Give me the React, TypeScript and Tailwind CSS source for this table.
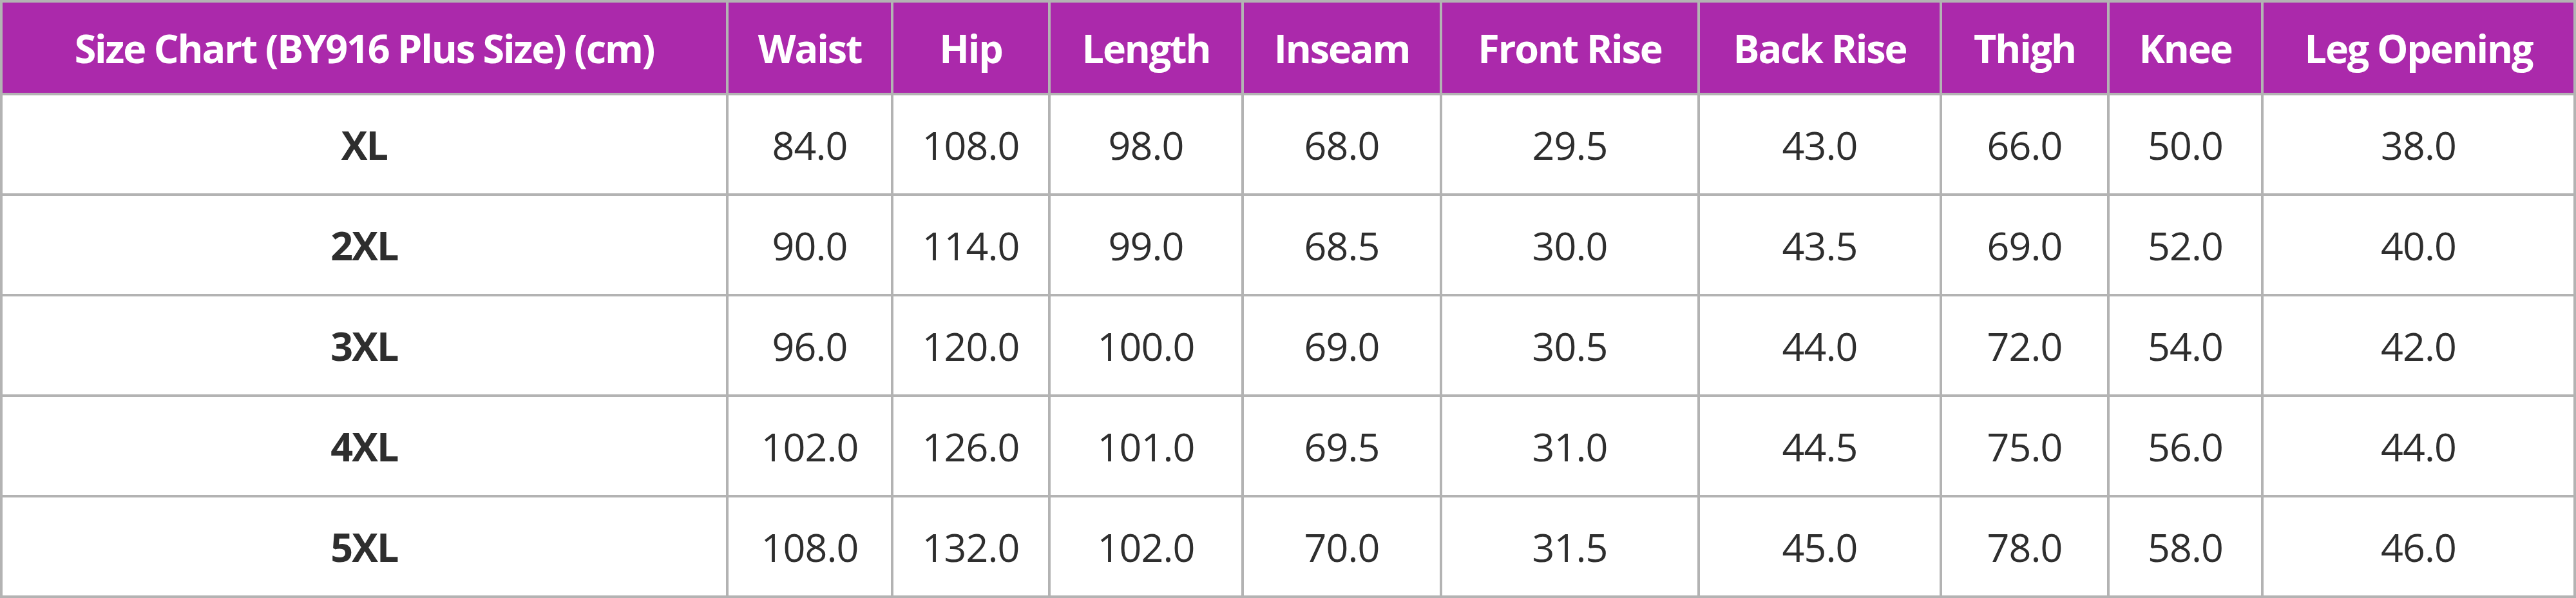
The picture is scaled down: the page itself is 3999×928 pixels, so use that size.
import React from "react";

const headers = [
  "Size Chart (BY916 Plus Size) (cm)",
  "Waist",
  "Hip",
  "Length",
  "Inseam",
  "Front Rise",
  "Back Rise",
  "Thigh",
  "Knee",
  "Leg Opening",
];

const rows: string[][] = [
  ["XL", "84.0", "108.0", "98.0", "68.0", "29.5", "43.0", "66.0", "50.0", "38.0"],
  ["2XL", "90.0", "114.0", "99.0", "68.5", "30.0", "43.5", "69.0", "52.0", "40.0"],
  ["3XL", "96.0", "120.0", "100.0", "69.0", "30.5", "44.0", "72.0", "54.0", "42.0"],
  ["4XL", "102.0", "126.0", "101.0", "69.5", "31.0", "44.5", "75.0", "56.0", "44.0"],
  ["5XL", "108.0", "132.0", "102.0", "70.0", "31.5", "45.0", "78.0", "58.0", "46.0"],
];

export default function App() {
  return (
    <div
      className="w-[3999px] h-[928px] bg-[#b3b3b3] p-[4px] grid gap-[4px] grid-cols-[1123px_252px_240px_296px_304px_396px_372px_256px_235px_481px] grid-rows-[140px_repeat(5,152px)] text-[61px] leading-none"
      style={{ fontFamily: '"Open Sans", "Noto Sans", sans-serif' }}
    >
      {headers.map((h) => (
        <div
          key={h}
          className="bg-[#ab29ab] text-white font-bold tracking-[-0.035em] flex items-center justify-center whitespace-nowrap"
        >
          {h}
        </div>
      ))}
      {rows.map((r) =>
        r.map((c, i) => (
          <div
            key={r[0] + "-" + i}
            className={
              "bg-white text-[#2e2e2e] flex items-center justify-center whitespace-nowrap " +
              (i === 0 ? "font-bold tracking-[-0.03em]" : "font-normal tracking-[-0.015em]")
            }
          >
            {c}
          </div>
        ))
      )}
    </div>
  );
}
